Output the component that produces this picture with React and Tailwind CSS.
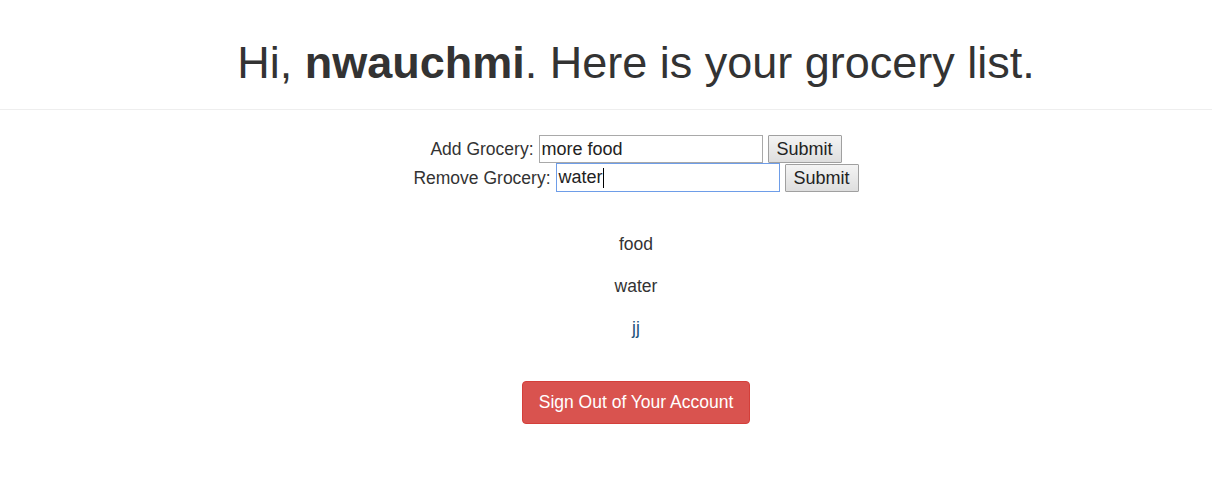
import { useState } from 'react'

const Row = ({ label, value, focused }) => (
  <div className="flex items-center justify-center h-[28.5px]">
    <label className="mr-[5px]">{label}</label>
    {focused ? (
      <div className="w-[224px] h-[29px] border border-[#6e9de8] bg-white px-[2px] flex items-center text-[18px] text-[#222]">
        {value}
        <span className="inline-block w-px h-[20px] bg-black" />
      </div>
    ) : (
      <input value={value} readOnly
        className="w-[224px] h-[28px] border border-[#a9a9a9] bg-white px-[2px] text-[18px] text-[#222] outline-none" />
    )}
    <button className="ml-[5px] h-[28px] px-[8px] border border-[#a0a0a0] bg-gradient-to-b from-[#f4f4f4] to-[#dedede] text-[18px] text-[#222] rounded-[1px]">
      Submit
    </button>
  </div>
)

export default function App() {
  const [items] = useState(['food', 'water', 'jj'])
  return (
    <div className="min-h-[500px] bg-white text-[#333] font-['Liberation_Sans',Arial,sans-serif]">
      <div className="border-b border-[#eee] pt-[35px] pb-[18px] pl-[60px]">
        <h1 className="text-center text-[45px] leading-[56px]">
          Hi, <b>nwauchmi</b>. Here is your grocery list.
        </h1>
      </div>
      <div className="pl-[60px] pt-[25px] text-[17.5px]">
        <Row label="Add Grocery:" value="more food" />
        <Row label="Remove Grocery:" value="water" focused />
        <div className="mt-[31px] flex flex-col items-center">
          {items.map((it, i) => (
            <div key={it} className={'h-[42px] leading-[42px] ' + (i === 2 ? 'text-[#23527c]' : '')}>{it}</div>
          ))}
        </div>
        <div className="flex justify-center mt-[32px]">
          <button className="w-[228px] h-[43px] bg-[#d9534f] border border-[#d43f3a] rounded-[4px] text-white text-[17.5px]">
            Sign Out of Your Account
          </button>
        </div>
      </div>
    </div>
  )
}
